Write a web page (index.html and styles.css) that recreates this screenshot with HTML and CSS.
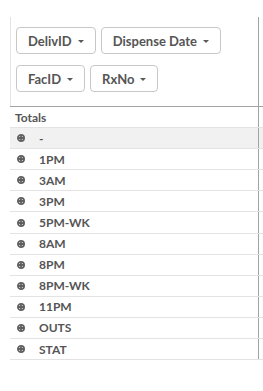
FILE: index.html
```html
<!DOCTYPE html>
<html>
  <head>
    <meta charset="UTF-8" />
    <title>Pivot table</title>
    <link rel="stylesheet" href="styles.css">
  </head>
  <body>
    <div class="sheet">
      <div class="line filter-line">
        <div class="main filters">
          <div class="f-row">
            <button class="chip">DelivID <span class="caret"></span></button>
            <button class="chip">Dispense Date <span class="caret"></span></button>
          </div>
          <div class="f-row">
            <button class="chip">FacID <span class="caret"></span></button>
            <button class="chip">RxNo <span class="caret"></span></button>
          </div>
        </div>
        <div class="rest"></div>
      </div>

      <div class="line row">
        <div class="main cell totals">Totals</div>
        <div class="rest"></div>
      </div>

      <div class="line row hover">
        <div class="main cell"><svg class="plus" viewBox="0 0 8 8"><circle cx="4" cy="4" r="3.1" /><path d="M4 1.6v4.8M1.6 4h4.8" /></svg>-</div>
        <div class="rest"></div>
      </div>
      <div class="line row">
        <div class="main cell"><svg class="plus" viewBox="0 0 8 8"><circle cx="4" cy="4" r="3.1" /><path d="M4 1.6v4.8M1.6 4h4.8" /></svg>1PM</div>
        <div class="rest"></div>
      </div>
      <div class="line row">
        <div class="main cell"><svg class="plus" viewBox="0 0 8 8"><circle cx="4" cy="4" r="3.1" /><path d="M4 1.6v4.8M1.6 4h4.8" /></svg>3AM</div>
        <div class="rest"></div>
      </div>
      <div class="line row">
        <div class="main cell"><svg class="plus" viewBox="0 0 8 8"><circle cx="4" cy="4" r="3.1" /><path d="M4 1.6v4.8M1.6 4h4.8" /></svg>3PM</div>
        <div class="rest"></div>
      </div>
      <div class="line row">
        <div class="main cell"><svg class="plus" viewBox="0 0 8 8"><circle cx="4" cy="4" r="3.1" /><path d="M4 1.6v4.8M1.6 4h4.8" /></svg>5PM-WK</div>
        <div class="rest"></div>
      </div>
      <div class="line row">
        <div class="main cell"><svg class="plus" viewBox="0 0 8 8"><circle cx="4" cy="4" r="3.1" /><path d="M4 1.6v4.8M1.6 4h4.8" /></svg>8AM</div>
        <div class="rest"></div>
      </div>
      <div class="line row">
        <div class="main cell"><svg class="plus" viewBox="0 0 8 8"><circle cx="4" cy="4" r="3.1" /><path d="M4 1.6v4.8M1.6 4h4.8" /></svg>8PM</div>
        <div class="rest"></div>
      </div>
      <div class="line row">
        <div class="main cell"><svg class="plus" viewBox="0 0 8 8"><circle cx="4" cy="4" r="3.1" /><path d="M4 1.6v4.8M1.6 4h4.8" /></svg>8PM-WK</div>
        <div class="rest"></div>
      </div>
      <div class="line row">
        <div class="main cell"><svg class="plus" viewBox="0 0 8 8"><circle cx="4" cy="4" r="3.1" /><path d="M4 1.6v4.8M1.6 4h4.8" /></svg>11PM</div>
        <div class="rest"></div>
      </div>
      <div class="line row">
        <div class="main cell"><svg class="plus" viewBox="0 0 8 8"><circle cx="4" cy="4" r="3.1" /><path d="M4 1.6v4.8M1.6 4h4.8" /></svg>OUTS</div>
        <div class="rest"></div>
      </div>
      <div class="line row">
        <div class="main cell"><svg class="plus" viewBox="0 0 8 8"><circle cx="4" cy="4" r="3.1" /><path d="M4 1.6v4.8M1.6 4h4.8" /></svg>STAT</div>
        <div class="rest"></div>
      </div>
    </div>
  </body>
</html>
```

FILE: styles.css
```css
:root {
  --text: #595959;
  --chip-border: #c8c8c8;
  --soft-line: #e3e3e3;
  --hard-line: #a3a3a3;
  --hover-bg: #f1f1f1;
}

body {
  margin: 0;
  padding: 0;
  background: #ffffff;
  overflow: hidden;
  font-family: Lato, "Liberation Sans", sans-serif;
  color: var(--text);
}

.sheet {
  padding-top: 17px;
  margin-left: 10px;
}

.line {
  display: flex;
}

.main {
  width: 249px;
  flex: none;
  box-sizing: border-box;
  border-right: 1px solid var(--hard-line);
}

.rest {
  flex: 1;
}

/* filter chips */
.filter-line {
  border-bottom: 1px solid var(--hard-line);
}

.filters {
  border-left: 1px solid var(--soft-line);
  padding: 10px 0 14px 5px;
  display: flex;
  flex-direction: column;
  gap: 11px;
}

.f-row {
  display: flex;
  gap: 5px;
}

.chip {
  all: unset;
  box-sizing: border-box;
  height: 27px;
  display: inline-flex;
  align-items: center;
  gap: 6px;
  padding: 0 11px 0 11px;
  border: 1px solid var(--chip-border);
  border-radius: 4px;
  font-size: 13px;
  font-weight: 700;
  color: #555555;
  cursor: pointer;
}

.caret {
  width: 0;
  height: 0;
  border-left: 3px solid transparent;
  border-right: 3px solid transparent;
  border-top: 3px solid var(--text);
  margin-top: 1px;
}

/* table rows */
.row {
  height: 21.1px;
  box-sizing: border-box;
  border-bottom: 1px solid var(--soft-line);
  font-size: 12px;
  font-weight: 700;
  color: #555555;
}

.cell {
  display: flex;
  align-items: center;
  padding-left: 7px;
}

.totals {
  padding-left: 5px;
}

.hover {
  background: var(--hover-bg);
}

.plus {
  width: 8px;
  height: 8px;
  margin-right: 14px;
  fill: none;
  stroke: #5f5f5f;
  stroke-width: 1.8;
}
```
